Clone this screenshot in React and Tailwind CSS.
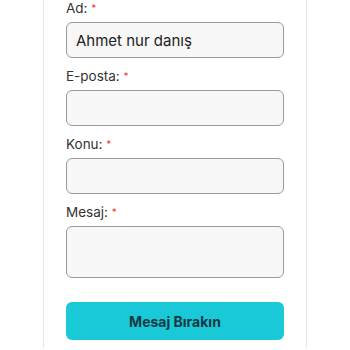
import React, { useState } from "react";

const fields = [
  { name: "ad", label: "Ad:" },
  { name: "eposta", label: "E-posta:" },
  { name: "konu", label: "Konu:" },
];

export default function App() {
  const [form, setForm] = useState({ ad: "Ahmet nur danış", eposta: "", konu: "", mesaj: "" });

  const handleChange = (e) => {
    setForm({ ...form, [e.target.name]: e.target.value });
  };

  return (
    <div className="w-[350px] h-[350px] overflow-hidden bg-white font-['Inter','Liberation_Sans',sans-serif]">
      <div className="ml-[43px] w-[264px] h-full border-x border-[#e6e6e6] px-[22px] -mt-[2px]">
        <form className="flex flex-col" onSubmit={(e) => e.preventDefault()}>
          {fields.map((f) => (
            <div key={f.name} className="flex flex-col mb-[8px]">
              <label className="text-[13.5px] leading-[20px] text-[#333] mb-[4px]">
                {f.label} <span className="text-[#e0483e] text-[10px] align-top">*</span>
              </label>
              <input
                type="text"
                name={f.name}
                value={form[f.name]}
                onChange={handleChange}
                className="h-[36px] w-full rounded-[6px] border border-[#9a9a9a] bg-[#f7f7f7] px-[9px] text-[15px] text-[#222] outline-none"
              />
            </div>
          ))}
          <div className="flex flex-col">
            <label className="text-[13.5px] leading-[20px] text-[#333] mb-[4px]">
              Mesaj: <span className="text-[#e0483e] text-[10px] align-top">*</span>
            </label>
            <textarea
              name="mesaj"
              value={form.mesaj}
              onChange={handleChange}
              className="h-[52px] w-full resize-none rounded-[6px] border border-[#9a9a9a] bg-[#f7f7f7] px-[9px] text-[15px] outline-none"
            ></textarea>
          </div>
          <button
            type="submit"
            className="mt-[24px] h-[38px] w-full rounded-[6px] bg-[#19c9d8] text-[14px] font-bold text-[#173845]"
          >
            Mesaj Bırakın
          </button>
        </form>
      </div>
    </div>
  );
}
